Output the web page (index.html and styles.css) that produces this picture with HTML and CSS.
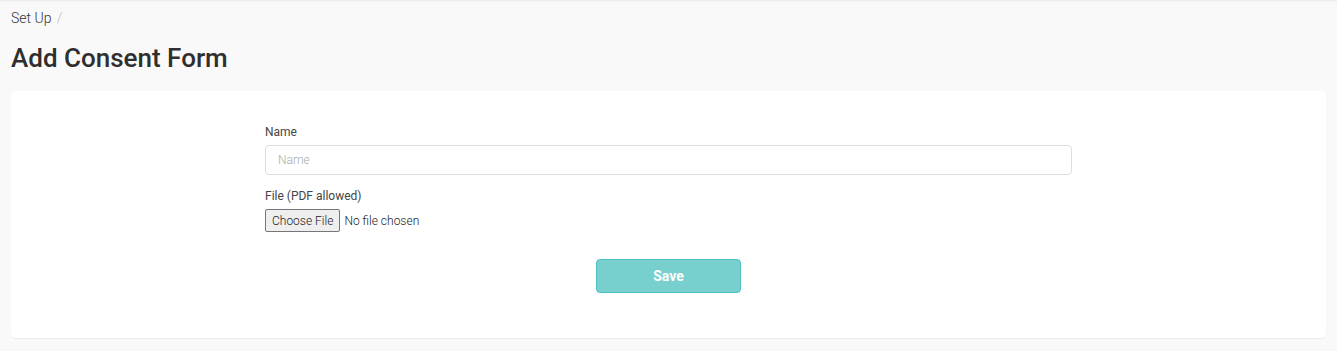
FILE: index.html
```html
<!DOCTYPE html>
<html lang="en">
<head>
    <meta charset="UTF-8">
    <meta name="viewport" content="width=device-width, initial-scale=1.0">
    <title>Add Consent Form</title>
    <link rel="stylesheet" href="styles.css">
</head>
<body>
    <div class="page">
        <div class="breadcrumb">
            <span>Set Up</span>
            <span class="sep">/</span>
        </div>
        <h1 class="page-title">Add Consent Form</h1>

        <div class="card">
            <form class="consent-form">
                <label for="name">Name</label>
                <input type="text" id="name" class="form-control" placeholder="Name">

                <label for="file">File (PDF allowed)</label>
                <input type="file" id="file" class="file-input" accept="application/pdf">

                <div class="actions">
                    <button type="submit" class="btn-save">Save</button>
                </div>
            </form>
        </div>
    </div>
</body>
</html>
```

FILE: styles.css
```css
body {
    margin: 0;
    font-family: Roboto, "Liberation Sans", sans-serif;
    background-color: #f9f9f9;
    color: #333;
}

.page {
    padding: 9px 11px 12px;
    box-shadow: inset 0 2px 2px -1px rgba(0, 0, 0, 0.06);
}

.breadcrumb {
    font-size: 14px;
    font-weight: 300;
    line-height: 18px;
    color: #333;
}

.breadcrumb .sep {
    color: #bbb;
    margin-left: 2px;
}

.page-title {
    margin: 17px 0 19px;
    font-size: 26px;
    font-weight: 500;
    line-height: 28px;
    color: #2f2f2f;
}

.card {
    background: white;
    border-radius: 5px;
    box-shadow: 0 1px 1px rgba(0, 0, 0, 0.06);
    padding: 33px 0 45px;
}

.consent-form {
    width: 807px;
    margin: 0 auto;
}

label {
    display: block;
    font-size: 12px;
    line-height: 16px;
    color: #444;
    margin-bottom: 5px;
}

.form-control {
    display: block;
    box-sizing: border-box;
    width: 100%;
    height: 30px;
    padding: 0 12px;
    margin-bottom: 13px;
    border: 1px solid #ddd;
    border-radius: 4px;
    font-family: inherit;
    font-size: 12px;
    font-weight: 300;
    color: #333;
}

.form-control::placeholder {
    color: #aaa;
}

.file-input {
    display: block;
    font-family: inherit;
    font-size: 12px;
    font-weight: 300;
    color: #222;
    height: 23px;
}

.file-input::file-selector-button {
    font-family: inherit;
    font-size: 12px;
    font-weight: 300;
    color: #222;
    height: 23px;
    padding: 0 6px;
    margin-right: 4px;
    background: #efefef;
    border: 1px solid #767676;
    border-radius: 2px;
}

.actions {
    text-align: center;
    margin-top: 27px;
}

.btn-save {
    width: 145px;
    height: 34px;
    background: #77d0ce;
    color: white;
    border: 1px solid #4fc3c0;
    border-radius: 4px;
    font-family: inherit;
    font-size: 14px;
    font-weight: 700;
    cursor: pointer;
}
```
